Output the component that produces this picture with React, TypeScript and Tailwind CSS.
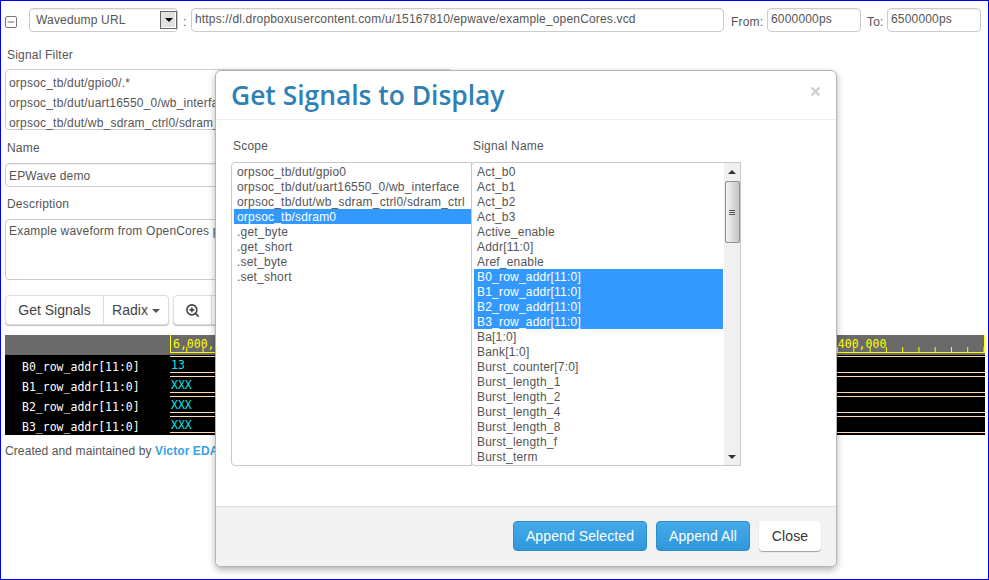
import { Minus, X, ZoomIn } from "lucide-react";

const SCOPES = [
  "orpsoc_tb/dut/gpio0",
  "orpsoc_tb/dut/uart16550_0/wb_interface",
  "orpsoc_tb/dut/wb_sdram_ctrl0/sdram_ctrl",
  "orpsoc_tb/sdram0",
  ".get_byte",
  ".get_short",
  ".set_byte",
  ".set_short",
];

const SIGNALS = [
  "Act_b0",
  "Act_b1",
  "Act_b2",
  "Act_b3",
  "Active_enable",
  "Addr[11:0]",
  "Aref_enable",
  "B0_row_addr[11:0]",
  "B1_row_addr[11:0]",
  "B2_row_addr[11:0]",
  "B3_row_addr[11:0]",
  "Ba[1:0]",
  "Bank[1:0]",
  "Burst_counter[7:0]",
  "Burst_length_1",
  "Burst_length_2",
  "Burst_length_4",
  "Burst_length_8",
  "Burst_length_f",
  "Burst_term",
];

const SELECTED_SIGNALS = ["B0_row_addr[11:0]", "B1_row_addr[11:0]", "B2_row_addr[11:0]", "B3_row_addr[11:0]"];

const WAVES = [
  { name: "B0_row_addr[11:0]", value: "13" },
  { name: "B1_row_addr[11:0]", value: "XXX" },
  { name: "B2_row_addr[11:0]", value: "XXX" },
  { name: "B3_row_addr[11:0]", value: "XXX" },
];

const TICKS = Array.from({ length: 51 }, (_, i) => i * 16.27);

const inputClass =
  "h-[24px] rounded-[4px] border border-[#cccccc] bg-white px-[5px] text-[12px] leading-[20px] tracking-[0.17px] text-[#555555] shadow-[inset_0_1px_1px_rgba(0,0,0,0.075)]";

export default function App() {
  return (
    <div className="relative h-[580px] w-[989px] overflow-hidden border border-[#0000f0] bg-white font-['Liberation_Sans',Arial,sans-serif] text-[12px] tracking-[0.2px] text-[#555555]">
      <div className="flex flex-col pl-[4px] pr-[4px] pt-[7px]">
        <TopRow />
        <FieldLabel className="mt-[16px]">Signal Filter</FieldLabel>
        <div className="mt-[6px] h-[61px] w-[448px] rounded-[4px] border border-[#cccccc] px-[3px] pt-[3px] leading-[20px]">
          <div>orpsoc_tb/dut/gpio0/.*</div>
          <div>orpsoc_tb/dut/uart16550_0/wb_interface/.*</div>
          <div>orpsoc_tb/dut/wb_sdram_ctrl0/sdram_ctrl/.*</div>
        </div>
        <FieldLabel className="mt-[11px]">Name</FieldLabel>
        <div className={`mt-[7px] w-[448px] ${inputClass} pl-[3px] pt-[2px]`}>EPWave demo</div>
        <FieldLabel className="mt-[10px]">Description</FieldLabel>
        <div className="mt-[7px] h-[61px] w-[448px] rounded-[4px] border border-[#cccccc] px-[3px] pt-[1px] leading-[20px]">
          Example waveform from OpenCores project
        </div>
        <Toolbar />
        <WaveViewer />
        <p className="mt-[9px] text-[12px] leading-[15px] tracking-[0.1px] text-[#555555]">
          Created and maintained by <span className="font-bold text-[#3ba1e2]">Victor EDA</span>
        </p>
      </div>
      <SignalsModal />
    </div>
  );
}

function FieldLabel({ className, children }: { className: string; children: string }) {
  return <div className={`pl-[2px] text-[12px] leading-[15px] text-[#555555] ${className}`}>{children}</div>;
}

function TopRow() {
  return (
    <div className="flex items-center">
      <div className="mt-[4px] flex h-[12px] w-[12px] items-center justify-center rounded-[2px] border border-[#777777] text-[#555555]">
        <Minus size={10} strokeWidth={2} />
      </div>
      <div className={`ml-[12px] flex w-[149px] items-center justify-between pl-[6px] pr-0 ${inputClass}`}>
        <span>Wavedump URL</span>
        <span className="flex h-[18px] w-[17px] items-center justify-center border border-[#666666] bg-[#e0e0e0] shadow-[inset_-1px_-1px_0_#ffffff]">
          <span className="h-0 w-0 border-x-[4px] border-t-[4px] border-x-transparent border-t-black" />
        </span>
      </div>
      <span className="ml-[5px] mt-[4px] w-[8px]">:</span>
      <div className={`w-[533px] pl-[3px] ${inputClass}`}>https://dl.dropboxusercontent.com/u/15167810/epwave/example_openCores.vcd</div>
      <span className="ml-[7px] mt-[3px] w-[36px]">From:</span>
      <div className={`w-[94px] pl-[3px] ${inputClass}`}>6000000ps</div>
      <span className="ml-[6px] mt-[3px] w-[20px]">To:</span>
      <div className={`w-[94px] pl-[3px] ${inputClass}`}>6500000ps</div>
    </div>
  );
}

function Toolbar() {
  return (
    <div className="mt-[15px] flex h-[30px] text-[14px] tracking-normal text-[#444444]">
      <div className="flex rounded-[4px] border border-[#dddddd] bg-white shadow-[0_1px_1px_rgba(0,0,0,0.25)]">
        <div className="flex w-[98px] items-center justify-center border-r border-[#dddddd]">Get Signals</div>
        <div className="flex w-[64px] items-center justify-center gap-[4px]">
          Radix
          <span className="mt-[2px] h-0 w-0 border-x-[4px] border-t-[4px] border-x-transparent border-t-[#555555]" />
        </div>
      </div>
      <div className="ml-[4px] flex w-[120px] rounded-[4px] border border-[#dddddd] bg-white shadow-[0_1px_1px_rgba(0,0,0,0.25)]">
        <div className="flex w-[38px] items-center justify-center border-r border-[#dddddd]">
          <ZoomIn size={15} strokeWidth={2.5} className="text-[#444444]" />
        </div>
      </div>
    </div>
  );
}

function WaveViewer() {
  return (
    <div className="mt-[10px] w-[980px] font-['DejaVu_Sans_Mono',monospace] text-[11.5px] tracking-normal">
      <div className="flex h-[20px] bg-[#6a6a6a]">
        <div className="w-[165px]" />
        <svg width="815" height="18" className="block">
          <rect x="0" y="0" width="1" height="18" fill="#ffff00" />
          <rect x="814" y="0" width="1" height="18" fill="#ffff00" />
          <rect x="0" y="17" width="815" height="1" fill="#ffff00" />
          {TICKS.map((x) => (
            <rect key={x} x={x} y="12" width="1" height="5" fill="#ffff00" />
          ))}
          <text x="3" y="13" fill="#ffff00" fontSize="11.5">
            6,000,000
          </text>
          <text x="654" y="13" fill="#ffff00" fontSize="11.5">
            6,400,000
          </text>
        </svg>
      </div>
      {WAVES.map((wave) => (
        <div key={wave.name} className="flex h-[20px] bg-black">
          <div className="w-[165px] pl-[17px] pt-[2px] leading-[20px] text-white">{wave.name}</div>
          <div className="mt-[1px] h-[17px] flex-1 border-y border-[#ffdcb0] pl-[1px] pt-[1px] leading-[14px] text-[#00e5e5]">
            {wave.value}
          </div>
        </div>
      ))}
    </div>
  );
}

function SignalsModal() {
  return (
    <div className="absolute left-[214px] top-[69px] flex h-[497px] w-[622px] flex-col overflow-hidden rounded-[6px] border border-[#b4b4b4] bg-white shadow-[0_3px_7px_rgba(0,0,0,0.3)]">
      <div className="flex h-[49px] shrink-0 items-center justify-between border-b border-[#eeeeee] pl-[15px] pr-[14px]">
        <h3 className="pb-[1px] font-['Open_Sans',sans-serif] text-[26.4px] font-semibold leading-[30px] tracking-normal text-[#2e81b5]">
          Get Signals to Display
        </h3>
        <X size={13} strokeWidth={4} className="mb-[8px] text-[#cccccc]" />
      </div>
      <div className="flex-1 pl-[15px] pt-[19px]">
        <div className="flex text-[12px] leading-[15px]">
          <span className="w-[242px] pl-[2px]">Scope</span>
          <span>Signal Name</span>
        </div>
        <div className="mt-[8px] flex h-[304px] w-[510px] leading-[15px]">
          <div className="h-full w-[241px] overflow-hidden rounded-l-[4px] border border-[#c8c8c8] pl-[2px] pt-[1px]">
            {SCOPES.map((scope) => (
              <div
                key={scope}
                className={`h-[15px] pl-[3px] leading-[17px] ${scope === "orpsoc_tb/sdram0" ? "bg-[#3399ff] text-white" : ""}`}
              >
                {scope}
              </div>
            ))}
          </div>
          <div className="-ml-[1px] flex h-full w-[270px] overflow-hidden rounded-l-[4px] border border-[#c8c8c8] pl-[2px]">
            <div className="flex-1 overflow-hidden pt-[1px]">
              {SIGNALS.map((signal) => (
                <div
                  key={signal}
                  className={`h-[15px] pl-[3px] leading-[17px] ${SELECTED_SIGNALS.includes(signal) ? "bg-[#3399ff] text-white" : ""}`}
                >
                  {signal}
                </div>
              ))}
            </div>
            <ScrollBar />
          </div>
        </div>
      </div>
      <div className="flex h-[60px] shrink-0 items-center justify-end gap-[9px] border-t border-[#dddddd] bg-[#f3f3f3] pb-[1px] pr-[15px] text-[14px] tracking-[0.1px]">
        <PrimaryButton width="w-[134px]">Append Selected</PrimaryButton>
        <PrimaryButton width="w-[94px]">Append All</PrimaryButton>
        <div className="flex h-[30px] w-[62px] items-center justify-center rounded-[4px] bg-white text-[#333333] shadow-[0_1px_1px_rgba(0,0,0,0.35)]">
          Close
        </div>
      </div>
    </div>
  );
}

function PrimaryButton({ width, children }: { width: string; children: string }) {
  return (
    <div
      className={`flex h-[30px] ${width} items-center justify-center rounded-[4px] border border-[#2f8ccb] bg-gradient-to-b from-[#45aaea] to-[#2e97dc] text-white`}
    >
      {children}
    </div>
  );
}

function ScrollBar() {
  return (
    <div className="ml-[1px] flex h-full w-[16px] shrink-0 flex-col items-center bg-[#f0f0f0]">
      <div className="flex h-[18px] items-center justify-center">
        <span className="h-0 w-0 border-x-[4px] border-b-[4px] border-x-transparent border-b-[#333333]" />
      </div>
      <div className="flex h-[62px] w-[15px] flex-col items-center justify-center gap-[1px] rounded-[2px] border border-[#8f8f8f] bg-gradient-to-r from-[#f4f4f4] to-[#c4c4c4]">
        <span className="h-px w-[6px] bg-[#555555]" />
        <span className="h-px w-[6px] bg-[#555555]" />
        <span className="h-px w-[6px] bg-[#555555]" />
      </div>
      <div className="mt-auto flex h-[17px] items-center justify-center">
        <span className="h-0 w-0 border-x-[4px] border-t-[4px] border-x-transparent border-t-[#333333]" />
      </div>
    </div>
  );
}
